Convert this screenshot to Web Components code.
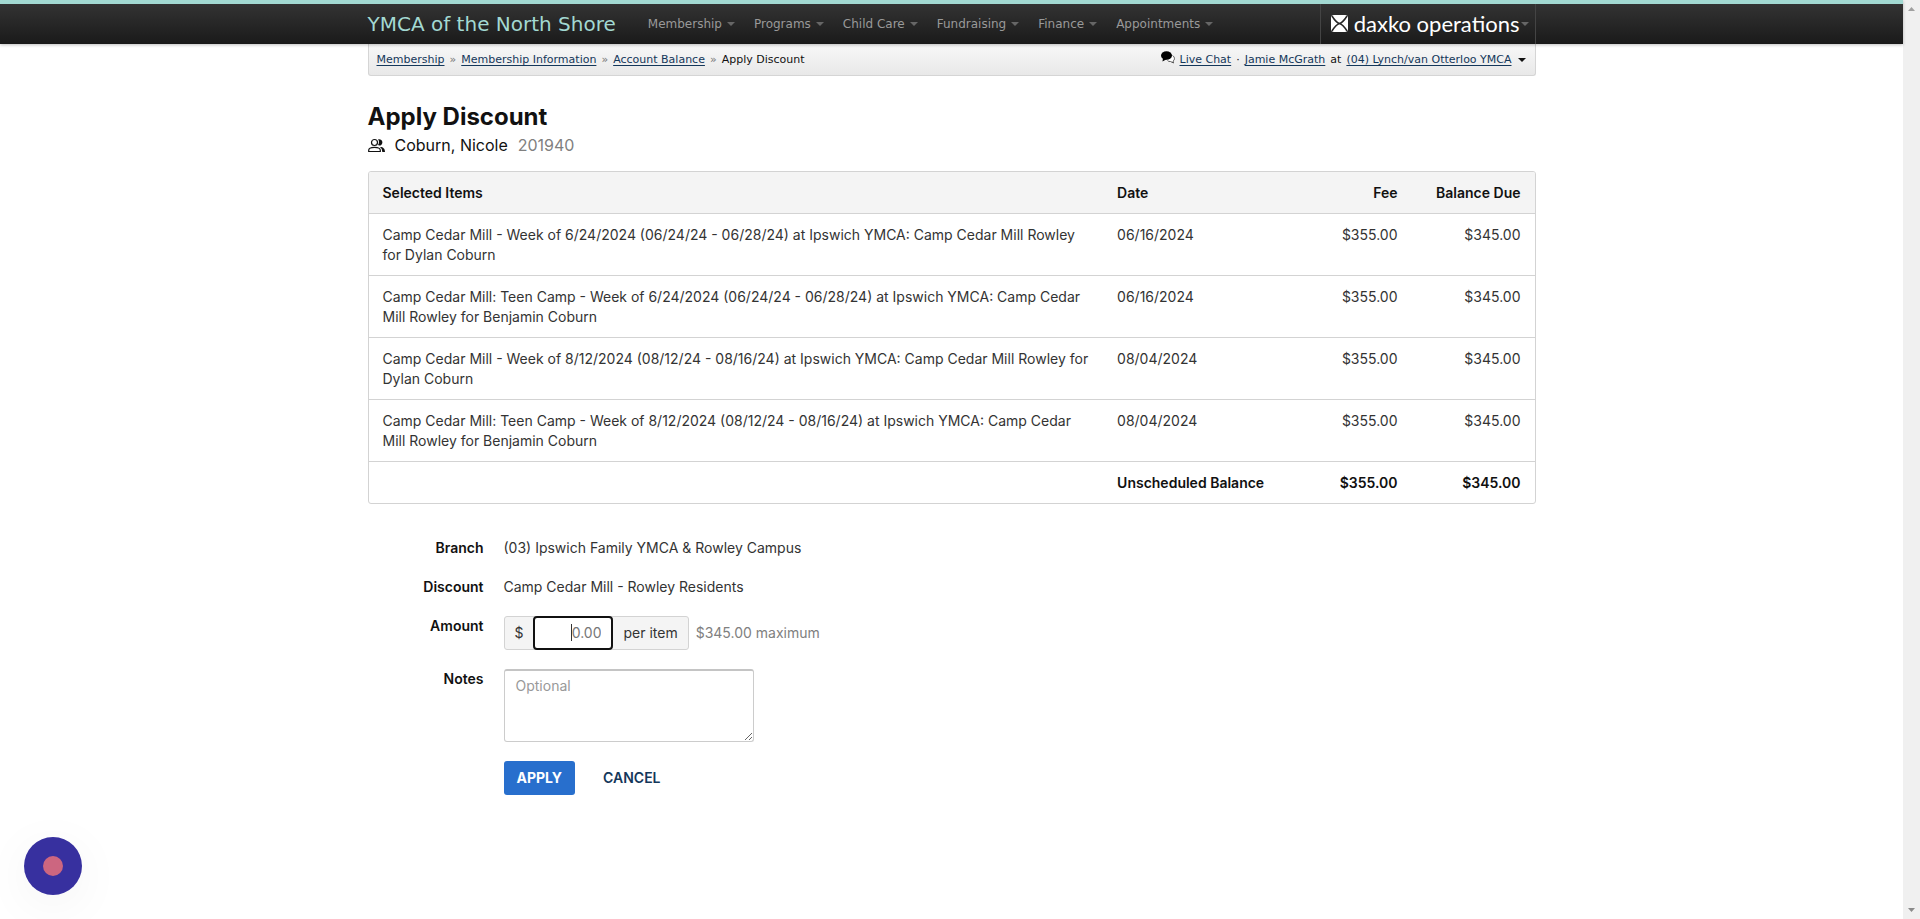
<!DOCTYPE html>
<html lang="en">
<head>
<meta charset="utf-8">
<title>Apply Discount</title>
<style>
  html, body {
    margin: 0;
    height: 100%;
  }
  body {
    background: #fff;
    color: #111;
    font: 14px/20px Inter, "Liberation Sans", sans-serif;
  }
</style>
</head>
<body>
<app-shell>
  <top-bar slot="top" brand="YMCA of the North Shore">
    <nav-menu>Membership</nav-menu>
    <nav-menu>Programs</nav-menu>
    <nav-menu>Child Care</nav-menu>
    <nav-menu>Fundraising</nav-menu>
    <nav-menu>Finance</nav-menu>
    <nav-menu>Appointments</nav-menu>
  </top-bar>
  <crumb-bar></crumb-bar>
  <member-heading name="Coburn, Nicole" number="201940">Apply Discount</member-heading>
  <items-table></items-table>
  <discount-form></discount-form>
</app-shell>
<record-bubble></record-bubble>

<script>
class AppShell extends HTMLElement {
  constructor() {
    super();
    const shadow = this.attachShadow({ mode: 'open' });
    shadow.innerHTML = `
      <style>
        :host {
          display: flex;
          min-height: 100%;
        }
        .page {
          flex: 1;
          min-width: 0;
        }
        main {
          max-width: 1168px;
          margin: 0 auto;
        }
        .scroll {
          width: 17px;
          background: #f0f0f0;
          display: flex;
          flex-direction: column;
          justify-content: space-between;
          align-items: center;
          padding: 6px 0;
          box-sizing: border-box;
        }
        svg { display: block; }
      </style>
      <div class="page">
        <slot name="top"></slot>
        <main><slot></slot></main>
      </div>
      <div class="scroll" aria-hidden="true">
        <svg width="7" height="6"><path d="M0 5L3.5 1L7 5z" fill="#a0a0a0"/></svg>
        <svg width="7" height="6"><path d="M0 1L3.5 5L7 1z" fill="#8a8a8a"/></svg>
      </div>
    `;
  }
}

class NavMenu extends HTMLElement {
  constructor() {
    super();
    const shadow = this.attachShadow({ mode: 'open' });
    shadow.innerHTML = `
      <style>
        :host { display: block; }
        button {
          display: flex;
          align-items: center;
          gap: 5px;
          padding: 0;
          border: 0;
          background: none;
          color: #999;
          font: inherit;
          white-space: nowrap;
        }
        i {
          border: 4px solid transparent;
          border-top-color: #666;
          border-bottom: 0;
        }
      </style>
      <button type="button"><slot></slot><i></i></button>
    `;
  }
}

class TopBar extends HTMLElement {
  constructor() {
    super();
    const shadow = this.attachShadow({ mode: 'open' });
    shadow.innerHTML = `
      <style>
        :host {
          display: block;
          border-top: 4px solid #a3d9d2;
          background: linear-gradient(#333, #1a1a1a);
          box-shadow: 0 1px 3px rgba(0, 0, 0, .25);
          position: relative;
        }
        .inner {
          max-width: 1168px;
          height: 40px;
          margin: 0 auto;
          display: flex;
          align-items: center;
          font: 12px/20px "DejaVu Sans", Verdana, sans-serif;
        }
        .brand {
          color: #a3d9d2;
          font-size: 20px;
          text-decoration: none;
          white-space: nowrap;
        }
        nav {
          flex: 1;
          display: flex;
          gap: 19px;
          margin-left: 32px;
        }
        .product {
          display: flex;
          align-items: center;
          align-self: stretch;
          padding: 0 6px 0 10px;
          border: 0 solid #444;
          border-width: 0 1px;
          background: none;
          color: #fff;
          font: 22px/24px Lato, sans-serif;
        }
        .product svg { margin: 0 6px 2px 0; }
        .product i {
          margin-left: 1px;
          border: 4px solid transparent;
          border-top-color: #666;
          border-bottom: 0;
        }
      </style>
      <div class="inner">
        <a class="brand" href="#"></a>
        <nav><slot></slot></nav>
        <button class="product" type="button">
          <svg width="17" height="17" viewBox="0 0 17 17" aria-hidden="true">
            <rect width="17" height="17" rx="3" fill="#fff"/>
            <path d="M1 1Q5 7.500 8.500 8.500Q12 7.500 16 1M1 16Q5 9.500 8.500 8.500Q12 9.500 16 16" fill="none" stroke="#262626" stroke-width="1.500"/>
          </svg>
          <span>daxko operations</span><i></i>
        </button>
      </div>
    `;
    shadow.querySelector('.brand').textContent = this.getAttribute('brand');
  }
}

class CrumbBar extends HTMLElement {
  constructor() {
    super();
    const shadow = this.attachShadow({ mode: 'open' });
    shadow.innerHTML = `
      <style>
        :host {
          display: flex;
          justify-content: space-between;
          padding: 6px 9px 5px 8px;
          border: 1px solid #d5d5d5;
          border-top: 0;
          border-radius: 0 0 3px 3px;
          background: linear-gradient(#f8f8f8, #e8e8e8);
          font: 11px/20px "DejaVu Sans", Verdana, sans-serif;
          color: #111;
        }
        nav, .user {
          display: flex;
          gap: 5px;
          white-space: nowrap;
        }
        a {
          color: #14375a;
          text-underline-offset: 2px;
        }
        nav span { color: #777; }
        .user { align-items: center; }
        .user svg { margin-bottom: 4px; }
        i {
          margin-left: 1px;
          border: 4px solid transparent;
          border-top-color: #111;
          border-bottom: 0;
        }
      </style>
      <nav aria-label="Breadcrumb">
        <a href="#">Membership</a><span>»</span>
        <a href="#">Membership Information</a><span>»</span>
        <a href="#">Account Balance</a><span>»</span>
        <div aria-current="page">Apply Discount</div>
      </nav>
      <div class="user">
        <svg width="14" height="14" viewBox="0 0 14 14" aria-hidden="true">
          <path d="M11.500 4.500C14 6 14 9 12 10L12.500 12L9.500 10.500Q7.500 10.700 6.500 9.500" fill="#fff" stroke="#555"/>
          <ellipse cx="5.500" cy="4.500" rx="5.500" ry="4.300"/>
          <path d="M2 7L1.500 10.500L6 8z"/>
        </svg>
        <a href="#">Live Chat</a><span>·</span>
        <a href="#">Jamie McGrath</a><span>at</span>
        <a href="#">(04) Lynch/van Otterloo YMCA</a><i></i>
      </div>
    `;
  }
}

class MemberHeading extends HTMLElement {
  constructor() {
    super();
    const shadow = this.attachShadow({ mode: 'open' });
    shadow.innerHTML = `
      <style>
        :host {
          display: block;
          padding: 25px 0 13px;
        }
        h1 {
          margin: 0;
          font-size: 24px;
          line-height: 32px;
          font-weight: 700;
        }
        p {
          display: flex;
          align-items: center;
          gap: 10px;
          margin: 0;
          font-size: 16px;
          line-height: 25px;
        }
        .number { color: #808080; }
      </style>
      <h1><slot></slot></h1>
      <p>
        <svg width="17" height="16" viewBox="0 0 17 16" aria-hidden="true">
          <path d="M10 1.300C14.500 .3 16 5.500 12.500 7.500C10.800 7.800 10.200 7 10 7Q12 4 10 1.300z" fill="#111"/>
          <path d="M12 9C15.500 9 17 11 17 14H14.300Q14.300 10.500 12 9z" fill="#111"/>
          <circle cx="6.500" cy="4.500" r="3" fill="none" stroke="#111" stroke-width="1.200"/>
          <path d="M.7 13.500V12.300C.7 10.300 3 9.300 6.500 9.300S12.300 10.300 12.300 12.300V13.500z" fill="none" stroke="#111" stroke-width="1.200"/>
        </svg>
        <span class="name"></span>
        <span class="number"></span>
      </p>
    `;
    shadow.querySelector('.name').textContent = this.getAttribute('name');
    shadow.querySelector('.number').textContent = this.getAttribute('number');
  }
}

const items = [
  ['Camp Cedar Mill - Week of 6/24/2024 (06/24/24 - 06/28/24) at Ipswich YMCA: Camp Cedar Mill Rowley for Dylan Coburn', '06/16/2024'],
  ['Camp Cedar Mill: Teen Camp - Week of 6/24/2024 (06/24/24 - 06/28/24) at Ipswich YMCA: Camp Cedar Mill Rowley for Benjamin Coburn', '06/16/2024'],
  ['Camp Cedar Mill - Week of 8/12/2024 (08/12/24 - 08/16/24) at Ipswich YMCA: Camp Cedar Mill Rowley for Dylan Coburn', '08/04/2024'],
  ['Camp Cedar Mill: Teen Camp - Week of 8/12/2024 (08/12/24 - 08/16/24) at Ipswich YMCA: Camp Cedar Mill Rowley for Benjamin Coburn', '08/04/2024']
];

class ItemsTable extends HTMLElement {
  constructor() {
    super();
    const shadow = this.attachShadow({ mode: 'open' });
    shadow.innerHTML = `
      <style>
        :host {
          display: block;
          border: 1px solid #d3d3d3;
          border-radius: 3px;
          overflow: hidden;
        }
        table {
          width: 100%;
          table-layout: fixed;
          border-spacing: 0;
        }
        .item { width: 63%; }
        .fee { width: 10%; }
        .due { width: 123px; }
        th, td {
          padding: 11px 14px 10px;
          border-bottom: 1px solid #d3d3d3;
          text-align: left;
          vertical-align: top;
        }
        td { color: #333; }
        th:nth-child(n + 3), td:nth-child(n + 3) { text-align: right; }
        thead th { background: #f4f4f4; }
        th, tfoot td {
          color: #111;
          font-weight: 600;
        }
        tfoot th, tfoot td { border-bottom: 0; }
      </style>
      <table>
        <colgroup><col class="item"><col><col class="fee"><col class="due"></colgroup>
        <thead>
          <tr><th>Selected Items</th><th>Date</th><th>Fee</th><th>Balance Due</th></tr>
        </thead>
        <tbody>
          ${items.map(([name, date]) => `<tr><td>${name}</td><td>${date}</td><td>$355.00</td><td>$345.00</td></tr>`).join('')}
        </tbody>
        <tfoot>
          <tr><td></td><th>Unscheduled Balance</th><td>$355.00</td><td>$345.00</td></tr>
        </tfoot>
      </table>
    `;
  }
}

class DiscountForm extends HTMLElement {
  constructor() {
    super();
    const shadow = this.attachShadow({ mode: 'open' });
    shadow.innerHTML = `
      <style>
        :host {
          display: block;
          padding: 34px 0 60px;
          color: #333;
        }
        form {
          display: grid;
          grid-template-columns: 116px 1fr;
          gap: 19px 20px;
          align-items: start;
        }
        label, .label {
          text-align: right;
          color: #111;
          font-weight: 600;
        }
        .amount {
          display: flex;
          align-items: center;
          gap: 7px;
          color: #808080;
        }
        .group {
          display: flex;
          height: 34px;
          box-sizing: border-box;
          border: 1px solid #d3d3d3;
          border-radius: 3px;
          background: #f4f4f4;
          color: #333;
          line-height: 32px;
        }
        .group span { padding: 0 10px; }
        input {
          width: 80px;
          margin: -1px 0;
          padding: 0 10px;
          box-sizing: border-box;
          border: 2px solid #111;
          border-radius: 4px;
          outline: 0;
          /* text cursor in front of the placeholder */
          background: linear-gradient(#333, #333) no-repeat 36px 6px / 1px 17px #fff;
          caret-color: transparent;
          font: inherit;
          text-align: right;
        }
        input::placeholder { color: #777; }
        textarea {
          display: block;
          width: 250px;
          height: 73px;
          padding: 5px 11px;
          box-sizing: border-box;
          border: 1px solid #ccc;
          border-top: 2px solid #c4c4c4;
          border-radius: 3px;
          background: #fff;
          font: inherit;
        }
        textarea::placeholder { color: #999; }
        .actions {
          grid-column: 2;
          display: flex;
          align-items: center;
          gap: 28px;
          font-weight: 600;
        }
        button {
          height: 34px;
          padding: 0 13px;
          border: 0;
          border-radius: 3px;
          background: #286fcd;
          color: #fff;
          font: inherit;
          font-weight: 700;
        }
        a {
          color: #14375a;
          text-decoration: none;
        }
      </style>
      <form>
        <div class="label">Branch</div>
        <div>(03) Ipswich Family YMCA &amp; Rowley Campus</div>
        <div class="label">Discount</div>
        <div>Camp Cedar Mill - Rowley Residents</div>
        <label for="amount">Amount</label>
        <div class="amount">
          <div class="group">
            <span>$</span>
            <input id="amount" type="text" placeholder="0.00">
            <span>per item</span>
          </div>
          $345.00 maximum
        </div>
        <label for="notes">Notes</label>
        <textarea id="notes" placeholder="Optional"></textarea>
        <div class="actions">
          <button type="submit">APPLY</button>
          <a href="#">CANCEL</a>
        </div>
      </form>
    `;
  }
}

class RecordBubble extends HTMLElement {
  constructor() {
    super();
    const shadow = this.attachShadow({ mode: 'open' });
    shadow.innerHTML = `
      <style>
        :host {
          position: fixed;
          left: 24px;
          bottom: 24px;
        }
        button {
          display: grid;
          place-items: center;
          width: 58px;
          height: 58px;
          padding: 0;
          border: 0;
          border-radius: 50%;
          background: #37309f;
          box-shadow: 0 10px 50px rgba(0, 0, 0, .05);
        }
        i {
          width: 20px;
          height: 20px;
          border-radius: 50%;
          background: #cc6680;
        }
      </style>
      <button type="button" aria-label="Record"><i></i></button>
    `;
  }
}

customElements.define('app-shell', AppShell);
customElements.define('nav-menu', NavMenu);
customElements.define('top-bar', TopBar);
customElements.define('crumb-bar', CrumbBar);
customElements.define('member-heading', MemberHeading);
customElements.define('items-table', ItemsTable);
customElements.define('discount-form', DiscountForm);
customElements.define('record-bubble', RecordBubble);
</script>
</body>
</html>
